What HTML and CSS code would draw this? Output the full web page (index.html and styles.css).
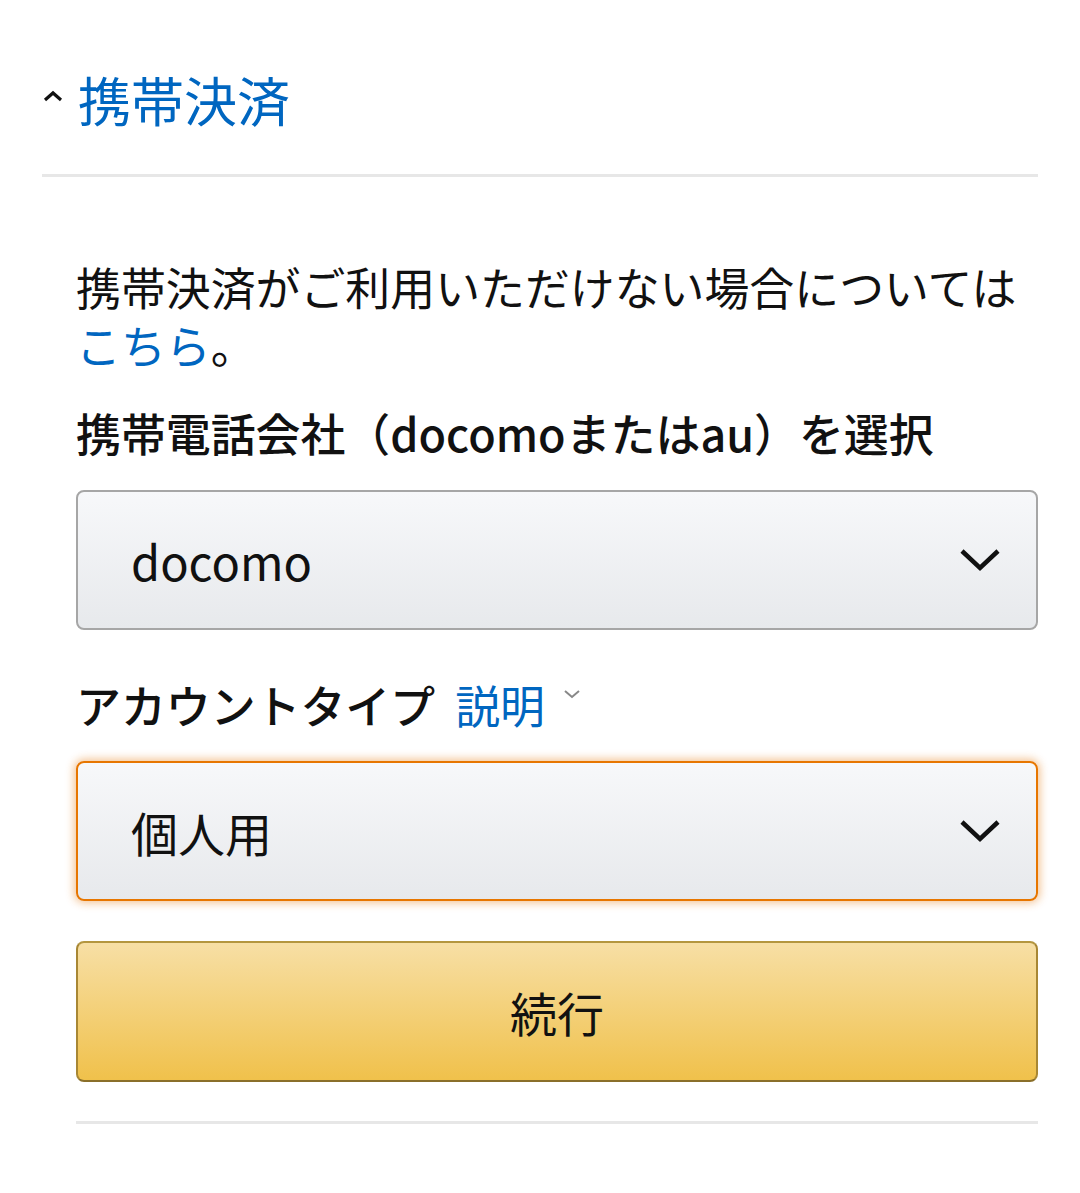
FILE: index.html
```html
<!DOCTYPE html>
<html lang="ja">
<head>
  <meta charset="UTF-8">
  <meta name="viewport" content="width=device-width, initial-scale=1.0">
  <title>携帯決済</title>
  <link rel="stylesheet" href="styles.css">
</head>
<body>
  <div class="page">
    <div class="section-head">
      <svg class="caret-up" width="22" height="14" viewBox="0 0 22 14">
        <path d="M3 11 L11 4 L19 11" fill="none" stroke="#111" stroke-width="3.2"/>
      </svg>
      <h1>携帯決済</h1>
    </div>

    <form class="pay-form">
      <p class="note">携帯決済がご利用いただけない場合については<a href="#">こちら</a>。</p>

      <label class="field-label" for="carrier">携帯電話会社（docomoまたはau）を選択</label>
      <div class="select">
        <span id="carrier">docomo</span>
        <svg class="chevron" width="42" height="26" viewBox="0 0 42 26">
          <path d="M3 4 L21 21 L39 4" fill="none" stroke="#111" stroke-width="4.5"/>
        </svg>
      </div>

      <div class="field-label account">
        <span>アカウントタイプ</span>
        <a href="#" class="help">説明</a>
        <svg class="mini-chevron" width="18" height="12" viewBox="0 0 18 12">
          <path d="M2 3 L9 9 L16 3" fill="none" stroke="#888" stroke-width="2"/>
        </svg>
      </div>
      <div class="select focused">
        <span>個人用</span>
        <svg class="chevron" width="42" height="26" viewBox="0 0 42 26">
          <path d="M3 4 L21 21 L39 4" fill="none" stroke="#111" stroke-width="4.5"/>
        </svg>
      </div>

      <button type="button" class="continue">続行</button>
    </form>
    <hr class="bottom-rule">
  </div>
</body>
</html>
```

FILE: styles.css
```css
body {
  margin: 0;
  background: #fff;
  font-family: "Noto Sans CJK JP", "Noto Sans", sans-serif;
  color: #111;
}
.page {
  padding: 67px 42px 0 42px;
}
.section-head {
  display: flex;
  align-items: center;
  gap: 14px;
  padding-bottom: 43px;
  border-bottom: 3px solid #e7e7e7;
}
.caret-up {
  margin-top: -6px;
}
.section-head h1 {
  margin: 0;
  font-size: 53px;
  line-height: 64px;
  font-weight: 400;
  color: #0066c0;
}
.pay-form {
  padding: 81px 0 0 34px;
}
.note {
  margin: 0;
  font-size: 44.9px;
  line-height: 58px;
  color: #111;
}
.note a {
  color: #0066c0;
  text-decoration: none;
}
.field-label {
  display: block;
  margin-top: 30px;
  font-size: 44.9px;
  line-height: 58px;
  font-weight: 500;
}
.account {
  display: flex;
  align-items: center;
  margin-top: 46px;
}
.account .help {
  margin-left: 20px;
  color: #0066c0;
  text-decoration: none;
  font-weight: 400;
}
.mini-chevron {
  margin-left: 18px;
  margin-top: -22px;
}
.select {
  display: flex;
  align-items: center;
  justify-content: space-between;
  box-sizing: border-box;
  height: 140px;
  margin-top: 28px;
  padding: 0 35px 0 53px;
  border: 2px solid #a6a6a6;
  border-radius: 8px;
  background: linear-gradient(#f7f8fa, #e7e9ec);
  font-size: 47px;
}
.select.focused {
  margin-top: 27px;
  border-color: #e77600;
  box-shadow: 0 0 8px 2px rgba(228, 121, 17, 0.45);
}
.continue {
  display: block;
  width: 100%;
  height: 141px;
  margin-top: 40px;
  border: 2px solid #a88734;
  border-color: #b4963f #a88734 #8a6f2a;
  border-radius: 8px;
  background: linear-gradient(#f7dfa5, #f0c14b);
  font-family: inherit;
  font-size: 47px;
  color: #111;
  cursor: pointer;
}
.bottom-rule {
  margin: 39px 0 0 34px;
  border: none;
  border-top: 3px solid #e7e7e7;
}
```
